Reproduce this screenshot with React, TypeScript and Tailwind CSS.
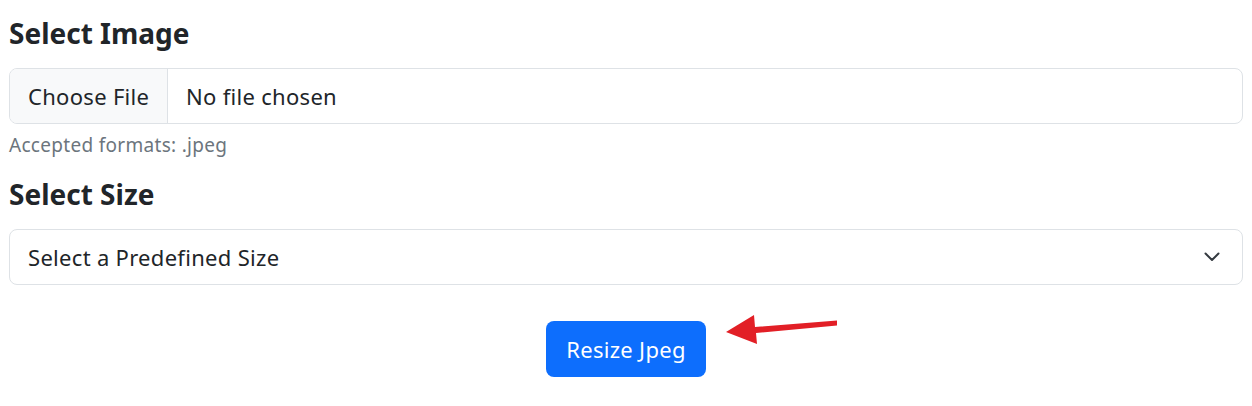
const font = { fontFamily: '"Noto Sans", "Open Sans", sans-serif' }

const App = () => {
  return (
    <div className="min-h-[406px] bg-white px-[9px] pt-[16px] text-[#212529]" style={font}>
      <h3 className="text-[28px] font-bold leading-[34px]">Select Image</h3>

      {/* file input */}
      <div className="mt-[18px] flex h-[56px] w-full items-stretch overflow-hidden rounded-[8px] border border-[#dee2e6] text-[22px] tracking-[0.3px]">
        <div className="flex w-[158px] items-center border-r border-[#dee2e6] bg-[#f8f9fa] pl-[18px]">
          Choose File
        </div>
        <div className="flex items-center pl-[18px]">No file chosen</div>
      </div>
      <p className="mt-[9px] text-[19px] leading-[24px] tracking-[0.3px] text-[#6c757d]">
        Accepted formats: .jpeg
      </p>

      <h3 className="mt-[20px] text-[28px] font-bold leading-[34px]">Select Size</h3>

      {/* select */}
      <div className="mt-[18px] flex h-[56px] w-full items-center justify-between rounded-[8px] border border-[#dee2e6] pl-[18px] pr-[22px] text-[22px] tracking-[0.3px]">
        <span>Select a Predefined Size</span>
        <svg width="16" height="10" viewBox="0 0 16 10" fill="none">
          <path d="M1.5 1.5 8 8l6.5-6.5" stroke="#343a40" strokeWidth="2" strokeLinecap="round" strokeLinejoin="round" />
        </svg>
      </div>

      <div className="mt-[36px] flex justify-center">
        <div className="relative">
          <button className="h-[56px] w-[160px] rounded-[8px] bg-[#0d6efd] text-[22px] tracking-[0.3px] text-white">
            Resize Jpeg
          </button>
          {/* red annotation arrow */}
          <svg
            className="absolute left-[178px] top-[-9px]"
            width="116"
            height="36"
            viewBox="0 0 116 36"
          >
            <polygon
              points="2,20 30,3 31,15 113,8.5 113,13.5 32,21 33,32"
              fill="#e21f26"
            />
          </svg>
        </div>
      </div>
    </div>
  )
}

export default App
